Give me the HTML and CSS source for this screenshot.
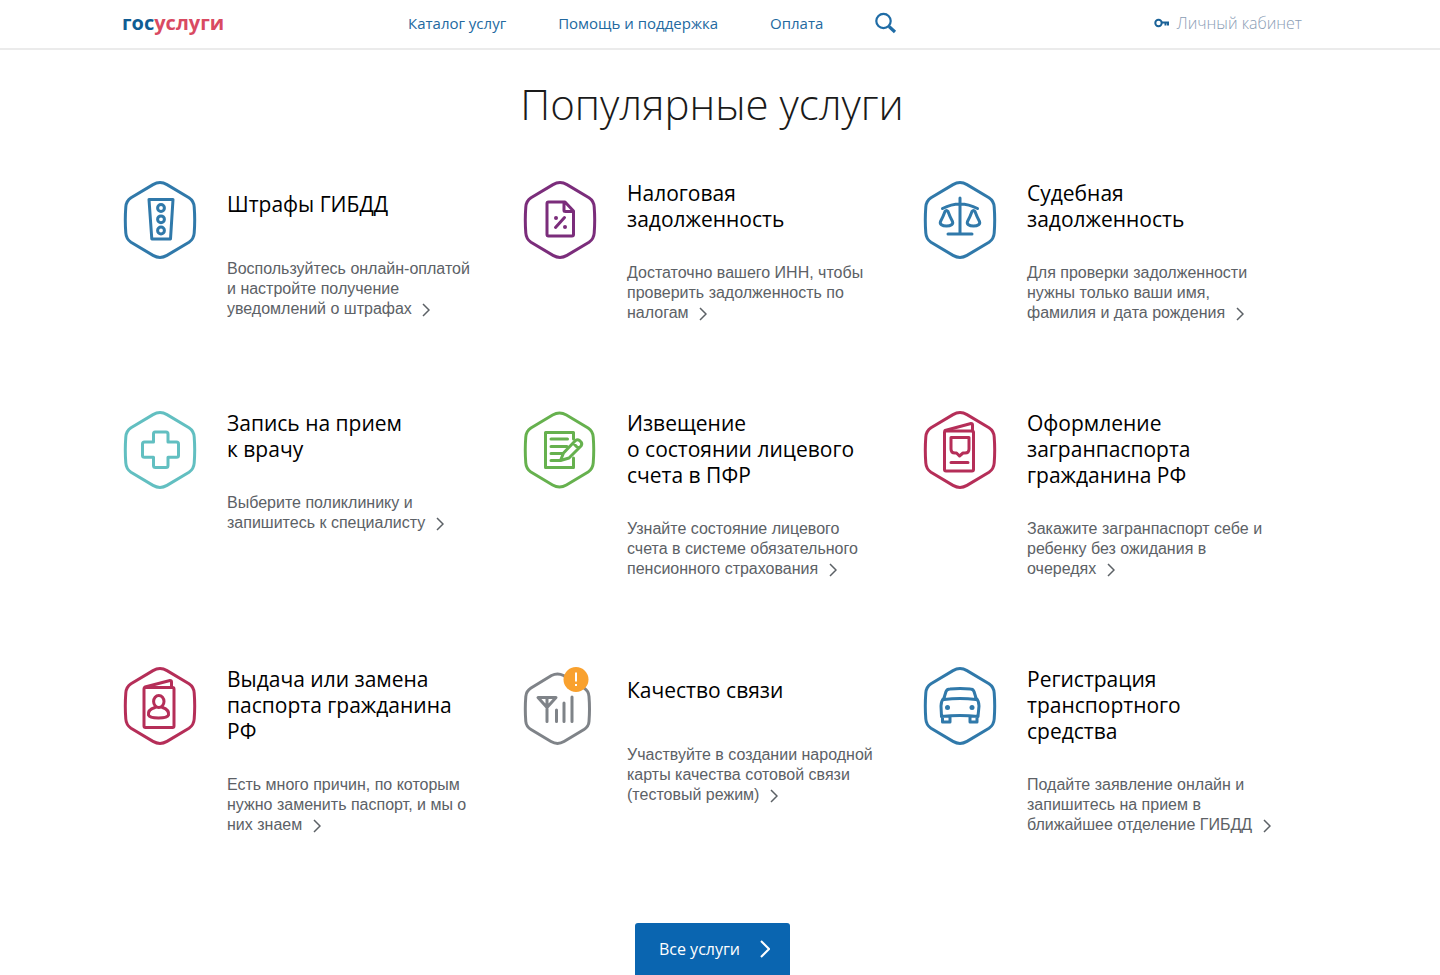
FILE: index.html
```html
<!DOCTYPE html>
<html lang="ru">
<head>
<meta charset="utf-8">
<title>Госуслуги</title>
<link rel="stylesheet" href="styles.css">
</head>
<body>
<svg class="defs" width="0" height="0" aria-hidden="true">
  <symbol id="hex" viewBox="13 10 74 80"><path d="M43 14.6Q50 10.6 57 14.6L79 27.8Q83.800 31 84.200 37Q85.200 50 84.200 63Q83.800 69 79 72.200L57 85.400Q50 89.400 43 85.400L21 72.200Q16.200 69 15.800 63Q14.800 50 15.800 37Q16.200 31 21 27.800Z"/></symbol>
  <symbol id="arrow" viewBox="0 0 8 14"><path d="M1 1L7 7L1 13"/></symbol>
</svg>
<header class="header">
  <div class="header-inner">
    <a class="logo" href="#">гос<span class="logo-red">услуги</span></a>
    <nav class="nav">
      <a href="#">Каталог услуг</a>
      <a href="#">Помощь и поддержка</a>
      <a href="#">Оплата</a>
      <button class="search" type="button" aria-label="Поиск">
        <svg width="22" height="22" viewBox="0 0 22 22"><circle cx="8.500" cy="9" r="7.200" stroke-width="2.200"/><path d="M14 14.500L20 20" stroke-width="3.200"/></svg>
      </button>
    </nav>
    <a class="account" href="#">
      <svg width="16" height="10" viewBox="0 0 16 10"><circle cx="4.500" cy="5" r="3.200"/><path d="M7.500 4.600H15M11.500 5V7.500M14 5V7.500"/></svg>
      Личный кабинет
    </a>
  </div>
</header>
<main class="main">
  <h1 class="heading">Популярные услуги</h1>
  <div class="grid">
    <a class="card" href="#">
      <svg class="icon blue" viewBox="13 10 74 80"><use href="#hex" x="13" y="10" width="74" height="80"/><path d="M39 29.500H63L60.500 69H41.800Z"/><circle cx="51" cy="38" r="3.400"/><circle cx="51" cy="49.300" r="3.400"/><circle cx="51" cy="60.500" r="3.400"/></svg>
      <div class="body"><h2 class="title">Штрафы ГИБДД</h2>
      <p class="desc">Воспользуйтесь онлайн-оплатой<br>и настройте получение<br>уведомлений о штрафах <svg class="arrow"><use href="#arrow"/></svg></p></div>
    </a>
    <a class="card" href="#">
      <svg class="icon purple" viewBox="13 10 74 80"><use href="#hex" x="13" y="10" width="74" height="80"/><path d="M55 32H38.500Q37 32 37 33.500V64.500Q37 66 38.500 66H62Q63.500 66 63.500 64.500V41ZM54 32V40.500Q54 41.500 55.500 41.500H63"/><path d="M45.500 57.500L54.500 47.500"/><circle class="dot" cx="46" cy="48" r="2"/><circle class="dot" cx="55" cy="57" r="2"/></svg>
      <div class="body"><h2 class="title">Налоговая<br>задолженность</h2>
      <p class="desc">Достаточно вашего ИНН, чтобы<br>проверить задолженность по<br>налогам <svg class="arrow"><use href="#arrow"/></svg></p></div>
    </a>
    <a class="card" href="#">
      <svg class="icon blue" viewBox="13 10 74 80"><use href="#hex" x="13" y="10" width="74" height="80"/><path d="M50 28V63.500M38 64H62M32.500 38.500Q50 29.500 67.500 38.500"/><path d="M35 41.500Q33 47 30.500 51.500C29.500 54 32 56 36.500 56S43.500 54 42.500 51.500Q40 47 38 41.500Q36.500 39.500 35 41.500ZM62 41.500Q60 47 57.500 51.500C56.500 54 59 56 63.500 56S70.500 54 69.500 51.500Q67 47 65 41.500Q63.500 39.500 62 41.500Z"/></svg>
      <div class="body"><h2 class="title">Судебная<br>задолженность</h2>
      <p class="desc">Для проверки задолженности<br>нужны только ваши имя,<br>фамилия и дата рождения <svg class="arrow"><use href="#arrow"/></svg></p></div>
    </a>
    <a class="card" href="#">
      <svg class="icon teal" viewBox="13 10 74 80"><use href="#hex" x="13" y="10" width="74" height="80"/><path d="M45 32H56Q58 32 58 34V42H66.500Q68.500 42 68.500 44V55.500Q68.500 57.300 66.500 57.300H58V65.500Q58 67.500 56 67.500H45.500Q43.500 67.500 43.500 65.500V57.300H34.500Q32.500 57.300 32.500 55.500V44Q32.500 42 34.500 42H43.500V34Q43.500 32 45 32Z"/></svg>
      <div class="body"><h2 class="title">Запись на прием<br>к врачу</h2>
      <p class="desc">Выберите поликлинику и<br>запишитесь к специалисту <svg class="arrow"><use href="#arrow"/></svg></p></div>
    </a>
    <a class="card" href="#">
      <svg class="icon green" viewBox="13 10 74 80"><use href="#hex" x="13" y="10" width="73" height="80" /><path d="M63.500 39V32.500H35.500V67.500H63.500V58"/><path d="M41 39H57.500M41 46.500H57M41 53.500H52.500M41 60.500H50"/><path d="M50.500 60.500L53.500 53L65.500 40.500Q67.500 39 69.500 40.500L71 42Q72.500 44 71 46L59 58L50.500 60.500M63 43L68.500 48.500"/></svg>
      <div class="body"><h2 class="title">Извещение<br>о состоянии лицевого<br>счета в ПФР</h2>
      <p class="desc">Узнайте состояние лицевого<br>счета в системе обязательного<br>пенсионного страхования <svg class="arrow"><use href="#arrow"/></svg></p></div>
    </a>
    <a class="card" href="#">
      <svg class="icon red" viewBox="13 10 74 80"><use href="#hex" x="13" y="10" width="74" height="80"/><rect x="34.500" y="31" width="29" height="40" rx="1.500"/><path d="M35 30.500L61 23.500Q62.500 23.500 62.500 25V31"/><path d="M41 37.500H59V49Q59 53 55 53H53L49.500 56L46.500 53H45Q41 53 41 49ZM41 62.500H58"/></svg>
      <div class="body"><h2 class="title">Оформление<br>загранпаспорта<br>гражданина РФ</h2>
      <p class="desc">Закажите загранпаспорт себе и<br>ребенку без ожидания в<br>очередях <svg class="arrow"><use href="#arrow"/></svg></p></div>
    </a>
    <a class="card" href="#">
      <svg class="icon red" viewBox="13 10 74 80"><use href="#hex" x="13" y="10" width="74" height="80"/><rect x="34" y="31.500" width="30" height="40" rx="1.500"/><path d="M35 31L60 24.500Q61.500 24.500 61.500 26V31"/><ellipse cx="48.800" cy="45.500" rx="5.200" ry="6"/><path d="M45 51.500C40 53 38 56 38.500 59Q39.500 62 48.500 62T58.500 59C59 56 57 53 52.500 51.500"/></svg>
      <div class="body"><h2 class="title">Выдача или замена<br>паспорта гражданина<br>РФ</h2>
      <p class="desc">Есть много причин, по которым<br>нужно заменить паспорт, и мы о<br>них знаем <svg class="arrow"><use href="#arrow"/></svg></p></div>
    </a>
    <a class="card" href="#">
      <svg class="icon gray" viewBox="13 10 74 80"><path d="M41.500 19.500Q47.500 16.500 53.500 19.500L74 32Q78.700 35 79 40.500Q80 53 79 65.500Q78.700 70.500 74 73.500L54 85.500Q47.500 89.300 41 85.500L21 73.500Q16.200 70.500 15.800 65.500Q14.800 53 15.800 40.500Q16.200 35 21 32Z"/><path d="M28 41.500H46L37 51.500ZM37 42V65.500M46.500 54V65.500M54 47V65.500M62 41V65.500"/><circle class="badge" cx="66" cy="23.500" r="12.500"/><path class="mark" d="M66 16.500V25.500M66 28V30"/></svg>
      <div class="body"><h2 class="title">Качество связи</h2>
      <p class="desc">Участвуйте в создании народной<br>карты качества сотовой связи<br>(тестовый режим) <svg class="arrow"><use href="#arrow"/></svg></p></div>
    </a>
    <a class="card" href="#">
      <svg class="icon blue" viewBox="13 10 74 80"><use href="#hex" x="13" y="10" width="74" height="80"/><path d="M34 42L36 35.500Q37 33 40 33Q50 32 60.500 33Q63 33 64 35.500L66 42Q69 45 69 50L68 60.500Q50 58.500 31.500 60.500L31 50Q31 45 34 42ZM34 43.500Q50 41.500 66 43.500M32.500 60V66H40V60M60 60V66H67V60"/><circle class="dot" cx="37.500" cy="51.500" r="2.500"/><circle class="dot" cx="62" cy="51.500" r="2.500"/></svg>
      <div class="body"><h2 class="title">Регистрация<br>транспортного<br>средства</h2>
      <p class="desc">Подайте заявление онлайн и<br>запишитесь на прием в<br>ближайшее отделение ГИБДД <svg class="arrow"><use href="#arrow"/></svg></p></div>
    </a>
  </div>
  <button class="all" type="button">Все услуги <svg class="all-arrow" viewBox="0 0 10 18"><path d="M1 1L9 9L1 17"/></svg></button>
</main>
</body>
</html>
```
FILE: styles.css
```css
* { box-sizing: border-box; }
body { margin: 0; background: #fff; color: #000; font-family: "Open Sans", "Noto Sans", sans-serif; }
a { color: inherit; text-decoration: none; }
svg { fill: none; stroke: currentColor; }
.defs { position: absolute; }
.header { border-bottom: 2px solid #ebebeb; }
.header-inner { display: flex; align-items: center; max-width: 1200px; height: 48px; margin: 0 auto; padding: 0 18px 2px 2px; }
.logo { width: 286px; color: #0f5c93; font-size: 20px; font-weight: 700; line-height: 24px; }
.logo-red { color: #d94a62; }
.nav { display: flex; align-items: center; gap: 52px; color: #23699f; font-size: 15px; font-weight: 500; }
.search { display: flex; padding: 0; border: 0; background: none; color: #1f6ca6; }
.account { display: flex; align-items: center; gap: 7px; margin-left: auto; color: #8a9db5; font-size: 16px; font-weight: 300; }
.account svg { color: #1a6298; stroke-width: 2; }
.main { max-width: 1200px; margin: 0 auto; display: flex; flex-direction: column; align-items: center; }
.heading { margin: 26px 16px 48px 0; color: #1a1a1a; font-size: 42px; font-weight: 300; line-height: 56px; }
.grid { display: grid; grid-template-columns: repeat(3, 1fr); row-gap: 87px; width: 100%; }
.card { display: flex; align-items: flex-start; gap: 30px; padding-left: 3px; }
.icon { flex: none; width: 74px; height: 80px; stroke-width: 3; stroke-linejoin: round; stroke-linecap: round; }
.blue { color: #3079aa; }
.purple { color: #7b2d7b; }
.teal { color: #62bfc1; }
.green { color: #66b14e; }
.red { color: #b52e58; }
.gray { color: #7f8388; }
.dot { fill: currentColor; stroke: none; }
.badge { fill: #f9a12e; stroke: none; }
.mark { stroke: #fff; stroke-width: 2; stroke-linecap: butt; }
.title { display: flex; align-items: center; min-height: 48px; margin: 0 0 31px; font-size: 21px; font-weight: 400; line-height: 26px; white-space: nowrap; }
.desc { margin: 0; color: #5c6166; font-family: "Liberation Sans", Arial, sans-serif; font-size: 16px; line-height: 20px; white-space: nowrap; }
.arrow { width: 8px; height: 14px; margin-left: 6px; vertical-align: -3px; stroke-width: 1.5; }
.all { display: flex; align-items: center; gap: 20px; height: 52px; margin: 88px 15px 0 0; padding: 0 20px 0 24px; border: 0; border-radius: 3px 3px 0 0; background: #0a65b0; color: #fff; font: 500 16px "Open Sans", sans-serif; }
.all-arrow { width: 10px; height: 18px; stroke-width: 2; }
```
